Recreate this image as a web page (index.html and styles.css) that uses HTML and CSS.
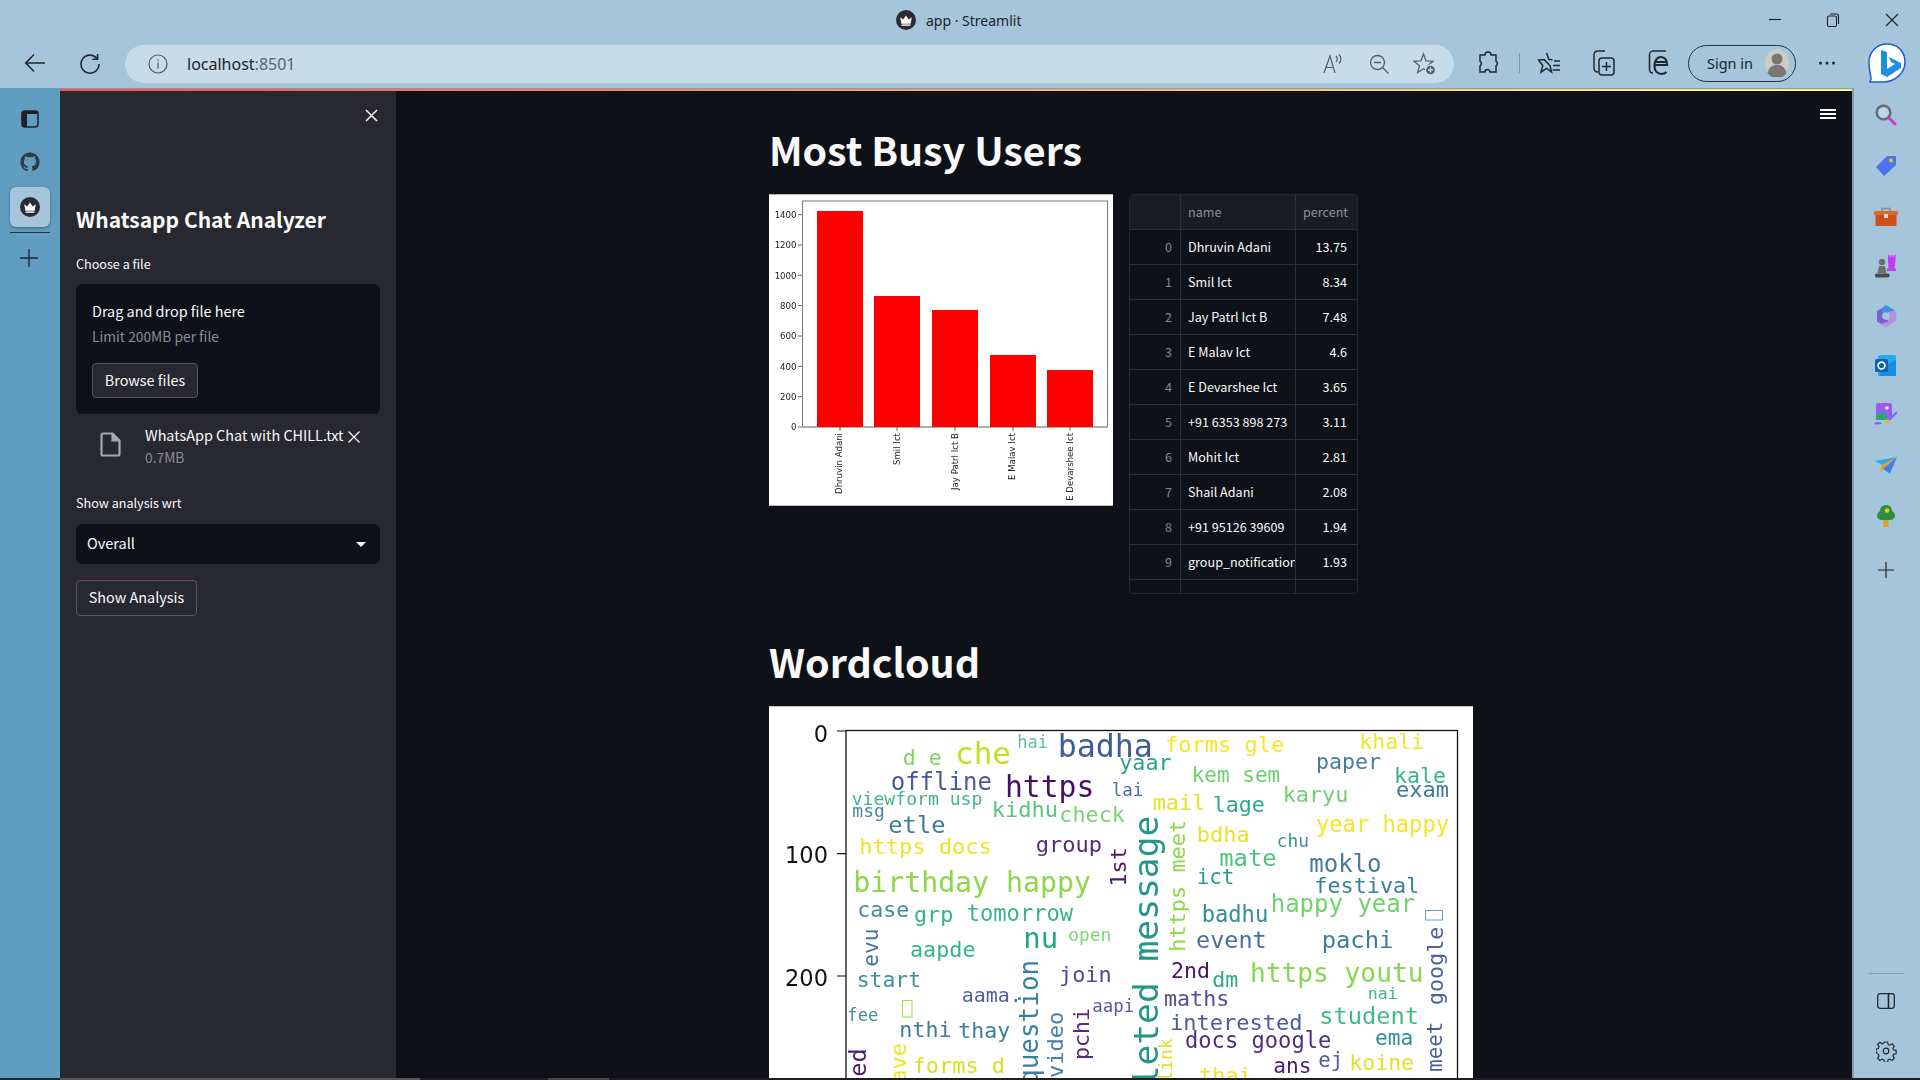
FILE: index.html
```html
<!DOCTYPE html>
<html lang="en">
<head>
<meta charset="utf-8">
<title>app · Streamlit</title>
<link rel="stylesheet" href="styles.css">
</head>
<body>
<svg class="defs" width="0" height="0" aria-hidden="true">
  <symbol id="crown" viewBox="0 0 20 20">
    <circle cx="10" cy="10" r="10" fill="#2b2b36"/>
    <path d="M4.2 7.2 7.2 9.6 10 5.6l2.8 4 3-2.4-1.2 6.6H5.4z" fill="#fff"/>
    <rect x="5.6" y="14.4" width="8.8" height="1.4" fill="#fff"/>
  </symbol>
</svg>

<header class="titlebar">
  <svg class="tab-icon" width="20" height="20"><use href="#crown"/></svg>
  <span class="tab-title">app · Streamlit</span>
  <div class="window-buttons">
    <svg class="wb-min" width="14" height="14" viewBox="0 0 14 14"><path d="M1 7.5h12" stroke="#222" stroke-width="1.2"/></svg>
    <svg class="wb-max" width="14" height="14" viewBox="0 0 14 14" fill="none" stroke="#222" stroke-width="1.1"><rect x="1.5" y="3" width="9" height="10.5" rx="1.5"/><path d="M4 1h6.5A2 2 0 0 1 12.5 3v8"/></svg>
    <svg class="wb-close" width="14" height="14" viewBox="0 0 14 14"><path d="M1 1l12 12M13 1 1 13" stroke="#222" stroke-width="1.1"/></svg>
  </div>
</header>

<nav class="toolbar">
  <svg class="tb-back" width="22" height="20" viewBox="0 0 22 20" fill="none" stroke="#1f2a30" stroke-width="1.6"><path d="M21 10H2M10 1.5 1.7 10l8.3 8.5"/></svg>
  <svg class="tb-reload" width="22" height="22" viewBox="0 0 22 22" fill="none" stroke="#1f2a30" stroke-width="1.6"><path d="M18 5.5A9 9 0 1 0 20 11"/><path d="M18.6 1v5.2h-5.2"/></svg>
  <div class="address">
    <svg width="20" height="20" viewBox="0 0 20 20" fill="none" stroke="#4a5a64" stroke-width="1.2"><circle cx="10" cy="10" r="9"/><path d="M10 8.6v6M10 5.2v1.6"/></svg>
    <span class="url"><b>localhost</b>:8501</span>
    <div class="address-icons">
      <svg class="ai-read" width="22" height="22" viewBox="0 0 22 22" fill="none" stroke="#4f5f69" stroke-width="1.2"><path d="M2 20 8 3l5 17M4 14.5h7.5"/><path d="M14 3c1.6 1.5 1.6 4 0 6M17 1.5c2.6 2.6 2.6 6.4 0 9"/></svg>
      <svg width="22" height="22" viewBox="0 0 22 22" fill="none" stroke="#4f5f69" stroke-width="1.3"><circle cx="9.5" cy="9.5" r="7"/><path d="M6 9.5h7M14.5 14.5l6 6"/></svg>
      <svg width="24" height="24" viewBox="0 0 24 24" fill="none" stroke="#4f5f69" stroke-width="1.3"><path d="M10.500 2 13 8.800l7 .4-5.400 4.500 1.800 6.800-5.900-3.800-5.900 3.800 1.800-6.800L1 9.200l7-.4z"/><circle cx="17.500" cy="18" r="5" fill="#4f5f69" stroke="#c7dce8"/><path d="M17.500 15.500v5M15 18h5" stroke="#c7dce8"/></svg>
    </div>
  </div>
  <div class="tools">
    <svg class="t-ext" width="22" height="24" viewBox="0 0 22 24" fill="none" stroke="#1f2a30" stroke-width="1.5"><path d="M8 4a3 3 0 0 1 6 0h5v6a3 3 0 0 1 0 5v6h-6a2.5 2.5 0 0 0-5 0H3v-6a3 3 0 0 0 0-5V4z"/></svg>
    <i class="t-sep"></i>
    <svg class="t-fav" width="24" height="24" viewBox="0 0 24 24" fill="none" stroke="#1f2a30" stroke-width="1.5"><path d="M9.500 2 12 8.500l3.500.2M13 14.500l1.500 6.500-5-3.500-5.500 3.700 1.800-6.700L1.500 9.200 7.200 8.600z"/><path d="M17 10h6M16 14.500h7M15.500 19h7.500"/></svg>
    <svg class="t-col" width="24" height="26" viewBox="0 0 24 26" fill="none" stroke="#1f2a30" stroke-width="1.5"><path d="M7 22c-2 0-4-1-4-4V5c0-2 1-4 4-4h7"/><rect x="8" y="8" width="15" height="17" rx="3"/><path d="M15.500 12v9M11 16.500h9"/></svg>
    <svg class="t-ie" width="22" height="26" viewBox="0 0 22 26" fill="none" stroke="#1f2a30" stroke-width="1.6"><path d="M5 23c-2 0-3.500-1-3.500-4V5C1.500 3 3 1 5 1h13"/><path d="M7 15h12c0-5-2-8-6-8s-6.500 4-6.500 9 3 8 7 8c2.500 0 4-1 5-2M7 12h11" stroke-width="2.200"/></svg>
    <div class="signin">
      <span>Sign in</span>
      <svg width="26" height="28" viewBox="0 0 26 28"><ellipse cx="13" cy="14" rx="12" ry="14" fill="#cfccc8"/><circle cx="13" cy="10" r="5.500" fill="#7b7772"/><path d="M3.500 24c1.500-6 5-8 9.500-8s8 2 9.500 8a12 14 0 0 1-19 0z" fill="#7b7772"/></svg>
    </div>
    <svg class="t-more" width="18" height="6" viewBox="0 0 18 6" fill="#1f2a30"><circle cx="2.500" cy="3" r="1.500"/><circle cx="9" cy="3" r="1.500"/><circle cx="15.500" cy="3" r="1.500"/></svg>
    <svg class="t-bing" width="38" height="40" viewBox="0 0 38 40"><path d="M19 1C9 1 1 9 1 19c0 5 1 11 2 16 .4 2-1 4-2 4h14c12 0 22-9 22-20S29 1 19 1z" fill="#fff" stroke="#1d5fd6" stroke-width="1.500"/><path d="M13 7l6 2v17l8-5-4-2-2-5 12 6v5l-14 9-6-3z" fill="#1b8fe0"/></svg>
  </div>
</nav>

<div class="middle">
  <aside class="left-rail">
    <svg class="lr-tabs" width="18" height="18" viewBox="0 0 18 18"><rect x="1" y="1" width="16" height="16" rx="3" fill="none" stroke="#1d2328" stroke-width="1.600"/><rect x="1" y="1" width="5" height="16" rx="1.500" fill="#1d2328"/><rect x="1" y="1" width="16" height="3" fill="#1d2328"/></svg>
    <svg class="lr-git" width="20" height="20" viewBox="0 0 24 24"><path fill="#2f3a42" d="M12 .5C5.650.5.500 5.650.500 12c0 5.080 3.290 9.390 7.860 10.910.570.100.780-.250.780-.550v-2.150c-3.200.700-3.870-1.360-3.870-1.360-.520-1.330-1.280-1.690-1.280-1.690-1.040-.710.080-.700.080-.700 1.150.080 1.760 1.180 1.760 1.180 1.030 1.760 2.690 1.250 3.350.960.100-.740.400-1.250.730-1.540-2.550-.290-5.240-1.280-5.240-5.680 0-1.250.450-2.280 1.180-3.080-.120-.290-.510-1.460.110-3.040 0 0 .960-.310 3.150 1.180a10.900 10.900 0 0 1 5.740 0c2.190-1.490 3.150-1.180 3.150-1.180.620 1.580.230 2.750.110 3.040.740.800 1.180 1.830 1.180 3.080 0 4.410-2.690 5.380-5.250 5.670.410.360.780 1.050.780 2.120v3.140c0 .300.210.660.790.550A11.500 11.500 0 0 0 23.500 12C23.500 5.650 18.350.500 12 .500z"/></svg>
    <div class="lr-active"><svg width="20" height="20"><use href="#crown"/></svg></div>
    <i class="lr-line"></i>
    <svg class="lr-plus" width="18" height="18" viewBox="0 0 18 18"><path d="M9 0v18M0 9h18" stroke="#1d2328" stroke-width="1.300"/></svg>
  </aside>

  <div class="workspace">
    <div class="decoration"></div>
    <div class="panes">
      <section class="sidebar">
        <div class="close-row"><svg width="13" height="13" viewBox="0 0 13 13"><path d="M1 1l11 11M12 1 1 12" stroke="#fafafa" stroke-width="1.500"/></svg></div>
        <h2 class="side-title">Whatsapp Chat Analyzer</h2>
        <div class="label first">Choose a file</div>
        <div class="uploader">
          <div class="drop-title">Drag and drop file here</div>
          <div class="drop-limit">Limit 200MB per file</div>
          <div class="btn browse">Browse files</div>
        </div>
        <div class="file-row">
          <svg class="file-icon" width="21" height="25" viewBox="0 0 21 25" fill="none" stroke="#a3a8b8" stroke-width="2.200"><path d="M3 1.500h9.500L19.500 8.500V22a1.500 1.500 0 0 1-1.500 1.500H3A1.500 1.500 0 0 1 1.500 22V3A1.500 1.500 0 0 1 3 1.500z"/><path d="M12.500 1.500v7h7" fill="#a3a8b8"/></svg>
          <div class="file-text">
            <div class="file-name">WhatsApp Chat with CHILL.txt</div>
            <div class="file-size">0.7MB</div>
          </div>
          <svg class="file-x" width="12" height="12" viewBox="0 0 12 12"><path d="M.5.500l11 11M11.500.500l-11 11" stroke="#fafafa" stroke-width="1.300"/></svg>
        </div>
        <div class="label second">Show analysis wrt</div>
        <div class="select"><span>Overall</span><i class="caret"></i></div>
        <i class="focus-line"></i>
        <div class="btn show">Show Analysis</div>
      </section>

      <main class="main">
        <svg class="menu" width="16" height="10" viewBox="0 0 16 10" fill="#fafafa"><rect width="16" height="2"/><rect y="4" width="16" height="2"/><rect y="8" width="16" height="2"/></svg>
        <h1 class="heading h-busy">Most Busy Users</h1>
        <div class="columns">
          <svg class="chart" width="344" height="312" viewBox="769 194 344 312">
            <rect x="769" y="194" width="344" height="312" fill="#fff"/>
            <path d="M769 194.500h344M769 505.500h344" stroke="#b5b5b5"/>
            <rect x="802.500" y="201" width="305" height="226" fill="none" stroke="#777"/>
            <path d="M802 427h306" stroke="#aaa" stroke-width="1.500"/>
            <g fill="#f00">
              <rect x="817" y="211" width="46" height="216"/>
              <rect x="874" y="296" width="46" height="131"/>
              <rect x="932" y="310" width="46" height="117"/>
              <rect x="990" y="355" width="46" height="72"/>
              <rect x="1047" y="370" width="46" height="57"/>
            </g>
            <g stroke="#444" stroke-width=".8">
              <path d="M798 214.700h4M798 245h4M798 275.300h4M798 305.600h4M798 336h4M798 366.300h4M798 396.700h4M798 427h4"/>
              <path d="M840 427v4M897 427v4M955 427v4M1013 427v4M1070 427v4"/>
            </g>
            <g class="ticks" text-anchor="end">
              <text x="796.500" y="218">1400</text><text x="796.500" y="248">1200</text><text x="796.500" y="278.500">1000</text><text x="796.500" y="309">800</text><text x="796.500" y="339">600</text><text x="796.500" y="369.500">400</text><text x="796.500" y="400">200</text><text x="796.500" y="430">0</text>
              <text transform="translate(842 433) rotate(-90)">Dhruvin Adani</text>
              <text transform="translate(899.500 433) rotate(-90)">Smil Ict</text>
              <text transform="translate(957.500 433) rotate(-90)">Jay Patrl Ict B</text>
              <text transform="translate(1015 433) rotate(-90)">E Malav Ict</text>
              <text transform="translate(1073 433) rotate(-90)">E Devarshee Ict</text>
            </g>
          </svg>

          <div class="frame">
            <div class="cell head"></div><div class="cell head">name</div><div class="cell head">percent</div>
            <div class="cell idx">0</div><div class="cell">Dhruvin Adani</div><div class="cell num">13.75</div>
            <div class="cell idx">1</div><div class="cell">Smil Ict</div><div class="cell num">8.34</div>
            <div class="cell idx">2</div><div class="cell">Jay Patrl Ict B</div><div class="cell num">7.48</div>
            <div class="cell idx">3</div><div class="cell">E Malav Ict</div><div class="cell num">4.6</div>
            <div class="cell idx">4</div><div class="cell">E Devarshee Ict</div><div class="cell num">3.65</div>
            <div class="cell idx">5</div><div class="cell">+91 6353 898 273</div><div class="cell num">3.11</div>
            <div class="cell idx">6</div><div class="cell">Mohit Ict</div><div class="cell num">2.81</div>
            <div class="cell idx">7</div><div class="cell">Shail Adani</div><div class="cell num">2.08</div>
            <div class="cell idx">8</div><div class="cell">+91 95126 39609</div><div class="cell num">1.94</div>
            <div class="cell idx">9</div><div class="cell">group_notification</div><div class="cell num">1.93</div>
            <div class="cell tail"></div><div class="cell tail"></div><div class="cell tail"></div>
          </div>
        </div>

        <h1 class="heading h-cloud">Wordcloud</h1>
        <svg class="cloud" width="704" height="372" viewBox="769 706 704 372">
          <rect x="769" y="706" width="704" height="372" fill="#fff"/>
          <path d="M769 706.500h704" stroke="#c5c5c5"/>
          <g class="words">
            <text x="1017.300" y="747.700" font-size="17" fill="#5cc490">hai</text>
            <text x="902.700" y="765" font-size="21.600" fill="#7dd560">d e</text>
            <text x="955" y="764" font-size="31" fill="#c2df23">che</text>
            <text x="1057.700" y="756.700" font-size="31.600" fill="#3e5d94">badha</text>
            <text x="890.700" y="790" font-size="24" fill="#46599a">offline</text>
            <text x="1005" y="796.700" font-size="29.700" fill="#440f68">https</text>
            <text x="1111.700" y="796" font-size="17.500" fill="#4a6fa5">lai</text>
            <text x="851.700" y="805" font-size="18.100" fill="#3fb58f">viewform usp</text>
            <text x="852.300" y="816.700" font-size="18" fill="#4a86a5">msg</text>
            <text x="991.700" y="816.700" font-size="22" fill="#5ec27f">kidhu</text>
            <text x="1059.300" y="821.700" font-size="21.800" fill="#7ad475">check</text>
            <text x="888.300" y="832.700" font-size="23.800" fill="#3c7d9a">etle</text>
            <text x="859.300" y="854" font-size="22" fill="#f5e12a">https docs</text>
            <text x="1035.700" y="851.700" font-size="22" fill="#5a2a75">group</text>
            <text x="853.300" y="892.300" font-size="28.200" fill="#8bd84a">birthday happy</text>
            <text x="857.300" y="916.700" font-size="21.600" fill="#3f8f9c">case</text>
            <text x="914" y="921.700" font-size="21.800" fill="#33b28c">grp</text>
            <text x="966.700" y="920.700" font-size="22.100" fill="#38b48a">tomorrow</text>
            <text x="1023.300" y="948.300" font-size="29" fill="#23a583">nu</text>
            <text x="1068.300" y="941" font-size="17.900" fill="#7ad67a">open</text>
            <text transform="translate(878.300 966.700) rotate(-90)" font-size="21.200" fill="#4a6fa5">evu</text>
            <text x="910" y="956.700" font-size="21.800" fill="#37b48a">aapde</text>
            <text transform="translate(1038.300 1085) rotate(-90)" font-size="26" fill="#3a7fa0">question</text>
            <text x="1059" y="981.700" font-size="21.900" fill="#4a4a96">join</text>
            <text x="856.700" y="987.300" font-size="21.400" fill="#3f8f9c">start</text>
            <text x="961.700" y="1001.700" font-size="20" fill="#4f5f9f">aama.</text>
            <text x="847.300" y="1020.700" font-size="17.200" fill="#3f8f9c">fee</text>
            <text x="1092.300" y="1011.700" font-size="17.400" fill="#5a5aa0">aapi</text>
            <text x="899.300" y="1036.700" font-size="21.700" fill="#3c7d9a">nthi</text>
            <text x="958.300" y="1038.300" font-size="21.500" fill="#3c7d9a">thay</text>
            <text transform="translate(1063.300 1078) rotate(-90)" font-size="22" fill="#4a7fa8">video</text>
            <text transform="translate(1089.300 1060) rotate(-90)" font-size="21.600" fill="#5a2a7a">pchi</text>
            <text transform="translate(866 1105) rotate(-90)" font-size="23.500" fill="#4a1a6e">need</text>
            <text transform="translate(905.700 1096) rotate(-90)" font-size="22" fill="#f1e22c">have</text>
            <text x="912.700" y="1072.700" font-size="21.900" fill="#d7e21f">forms d</text>
            <text transform="translate(1158.300 1128) rotate(-90)" font-size="34.600" fill="#24958a">deleted message</text>
            <text transform="translate(1126 886.700) rotate(-90)" font-size="22" fill="#481b6d">1st</text>
            <text transform="translate(1171.700 1081.600) rotate(-90)" font-size="18" fill="#d9e12b">link</text>
            <text x="1199.300" y="1083" font-size="21.700" fill="#f5e12a">thai</text>
            <text x="1165" y="751.700" font-size="22" fill="#f8e621">forms gle</text>
            <text x="1359.300" y="749.300" font-size="21.500" fill="#f1e531">khali</text>
            <text x="1119.300" y="770" font-size="21.700" fill="#2d9e8a">yaar</text>
            <text x="1191.700" y="781.700" font-size="21" fill="#6dcf6c">kem sem</text>
            <text x="1316" y="769.300" font-size="21.600" fill="#447da0">paper</text>
            <text x="1394" y="782.700" font-size="21.600" fill="#35b48a">kale</text>
            <text x="1396" y="796.700" font-size="22" fill="#3f7a9b">exam</text>
            <text x="1282.700" y="801.700" font-size="21.800" fill="#6ed06b">karyu</text>
            <text x="1152.700" y="810" font-size="21.900" fill="#e3e42a">mail</text>
            <text x="1212.700" y="811.700" font-size="21.700" fill="#2fa88a">lage</text>
            <text x="1316" y="831.700" font-size="22.100" fill="#f4e62b">year happy</text>
            <text x="1196.700" y="842.300" font-size="22" fill="#ece12a">bdha</text>
            <text x="1276.700" y="846.700" font-size="17.900" fill="#3f8f9c">chu</text>
            <text x="1219.300" y="865.700" font-size="23.800" fill="#4fc27c">mate</text>
            <text x="1309.300" y="871.700" font-size="24" fill="#467a9d">moklo</text>
            <text x="1196.700" y="884.300" font-size="20.900" fill="#2c9c8d">ict</text>
            <text x="1314.300" y="892.700" font-size="21.800" fill="#3a7f9c">festival</text>
            <text x="1270.700" y="912.300" font-size="24" fill="#6fd36d">happy year</text>
            <text x="1201.700" y="922.300" font-size="22.100" fill="#2f8f96">badhu</text>
            <text transform="translate(1185 951.700) rotate(-90)" font-size="21.900" fill="#8fd948">https meet</text>
            <text x="1196" y="947.700" font-size="23.500" fill="#4a6ea0">event</text>
            <text x="1321.700" y="947.700" font-size="23.800" fill="#3a7f9c">pachi</text>
            <text transform="translate(1442.700 1005) rotate(-90)" font-size="21.700" fill="#4f5e9e">google</text>
            <rect x="1425.500" y="910.500" width="17" height="9.500" fill="none" stroke="#6a9fc0" stroke-width="1"/>
            <text x="1171" y="977.700" font-size="21.600" fill="#4b1268">2nd</text>
            <text x="1212.300" y="986.700" font-size="21.600" fill="#2ea88a">dm</text>
            <text x="1250" y="981.700" font-size="26.200" fill="#83d94f">https youtu</text>
            <text x="1164" y="1005.700" font-size="21.700" fill="#5a4a96">maths</text>
            <text x="1367.700" y="999.300" font-size="16.600" fill="#3fb58f">nai</text>
            <text x="1319.300" y="1024" font-size="23.700" fill="#3ebc84">student</text>
            <text x="1170" y="1030" font-size="22" fill="#4b5b9e">interested</text>
            <text x="1185" y="1048.300" font-size="22.100" fill="#4f2d7f">docs google</text>
            <text x="1375" y="1045" font-size="21.200" fill="#2f8f96">ema</text>
            <text x="1318.300" y="1066.700" font-size="20.800" fill="#4f5e9e">ej</text>
            <text x="1273.300" y="1072.700" font-size="21.200" fill="#451f6f">ans</text>
            <text x="1349.300" y="1070" font-size="21.500" fill="#dfe32a">koine</text>
            <text transform="translate(1442.300 1071.700) rotate(-90)" font-size="20.800" fill="#4a5e9e">meet</text>
            <rect x="902.500" y="1000.500" width="9.500" height="16.500" fill="none" stroke="#9be54a" stroke-width="1.100"/>
          </g>
          <rect x="846" y="730.500" width="611.500" height="360" fill="none" stroke="#111" stroke-width="1.300"/>
          <path d="M837 731h9M837 853.700h9M837 976h9" stroke="#111" stroke-width="1.200"/>
          <g class="axis-labels" text-anchor="end">
            <text x="828" y="741.500">0</text><text x="828" y="863">100</text><text x="828" y="986">200</text>
          </g>
        </svg>
      </main>
    </div>
  </div>

  <aside class="right-rail">
    <svg class="rr-i search" width="22" height="22" viewBox="0 0 22 22" fill="none"><circle cx="8.500" cy="8.500" r="6.800" stroke="#6b6b70" stroke-width="2.600" fill="#bcd6e6"/><path d="M14 14l6 6" stroke="#c83fd6" stroke-width="3" stroke-linecap="round"/></svg>
    <svg class="rr-i tag" width="22" height="22" viewBox="0 0 22 22"><path d="M12 1h9v9L9 21 1 12z" fill="#4a74ee"/><circle cx="16" cy="5.500" r="2" fill="#f5c21c"/></svg>
    <svg class="rr-i box" width="24" height="20" viewBox="0 0 24 20"><path d="M8 4V1.500h8V4" fill="none" stroke="#8c8c8c" stroke-width="1.600"/><rect y="4" width="24" height="4.500" rx="1" fill="#e06a2a"/><rect x="1.500" y="8" width="21" height="11" rx="1" fill="#cf4f1c"/><rect x="10" y="7" width="4" height="4" fill="#d8d8d8"/></svg>
    <svg class="rr-i chess" width="24" height="24" viewBox="0 0 24 24"><path d="M14 1h1.500v1.500H17V1h1.500v1.500H20V1h1.500v6l-1 7.500h1.500v2.500h-9v-2.500h1.500L14 7z" fill="#c03df0"/><circle cx="8" cy="8" r="3.200" fill="#6e6e70"/><path d="M5 12h6l1.500 7H3.500z" fill="#6e6e70"/><rect x="1" y="19.500" width="14.500" height="4" rx="1.500" fill="#4b4b4d"/></svg>
    <svg class="rr-i m365" width="22" height="24" viewBox="0 0 22 24"><path d="M11 1 20 6.500v5L14 8l-7 4V4z" fill="#3e8fd6"/><path d="M2 7l5-3v9l7 4 0 0-3 6-9-5.500z" fill="#7a5fd0"/><path d="M20 6.500c2 3 2 8 0 11L11 23l-5-3 8-3V8z" fill="#b68fe0"/><circle cx="11" cy="12" r="3.800" fill="#a5c5da"/></svg>
    <svg class="rr-i outlook" width="22" height="22" viewBox="0 0 22 22"><rect x="3" y="0" width="18" height="21" rx="1.500" fill="#28a8ea"/><path d="M9 11l12-6v16H4z" fill="#1490df"/><rect y="4" width="13" height="13" rx="1.500" fill="#0a63b8"/><circle cx="6.500" cy="10.500" r="3.400" fill="none" stroke="#fff" stroke-width="1.600"/></svg>
    <svg class="rr-i image" width="24" height="24" viewBox="0 0 24 24"><rect x="2" y="0" width="16" height="17" rx="2" fill="#9a5cf0"/><circle cx="13" cy="5" r="1.800" fill="#eee"/><path d="M2 13l6-5 6 6-3 3H2z" fill="#2fa56f"/><path d="M1 21c2-2 4 0 6-1M23 9l-9 9" stroke="#7a6cf0" stroke-width="2.200" fill="none"/><path d="M11 19l3-3 2 2-3 3z" fill="#f0b41c"/></svg>
    <svg class="rr-i plane" width="22" height="17" viewBox="0 0 22 17"><path d="M0 4 22 0 7 8z" fill="#29a9ee"/><path d="M22 0 7 8l-2 8 3-4z" fill="#f09a1c"/><path d="M22 0 8 12l7 4.500z" fill="#3f7fee"/></svg>
    <svg class="rr-i tree" width="18" height="22" viewBox="0 0 18 22"><path d="M9 0c4 0 6 3 6 6 2 1 3 3 3 5 0 2-2 4-5 4H5c-3 0-5-2-5-4 0-2 1-4 3-5 0-3 2-6 6-6z" fill="#2f8f3f"/><rect x="6.500" y="15" width="5" height="7" fill="#e0a020"/><circle cx="10" cy="5.500" r="2.300" fill="#f2c51c"/></svg>
    <svg class="rr-i plus" width="16" height="16" viewBox="0 0 16 16"><path d="M8 0v16M0 8h16" stroke="#1d2328" stroke-width="1.200"/></svg>
    <div class="rr-bottom">
      <i class="rr-sep"></i>
      <svg width="18" height="16" viewBox="0 0 18 16" fill="none" stroke="#1f2a30" stroke-width="1.300"><rect x=".7" y=".7" width="16.600" height="14.600" rx="2.500"/><path d="M11.500.7v14.600" stroke-width="1.600"/></svg>
      <svg width="21" height="21" viewBox="0 0 21 21" fill="none" stroke="#1f2a30" stroke-width="1.200"><path d="M8.800 1h3.400l.6 2.700 1.700.7 2.400-1.500 2.400 2.400-1.500 2.400.7 1.700 2.700.6v3.400l-2.700.6-.7 1.700 1.500 2.400-2.400 2.400-2.400-1.500-1.700.7-.6 2.700H8.800l-.6-2.700-1.700-.7-2.400 1.500-2.400-2.400 1.500-2.400-.7-1.700L0 11.900V8.500l2.500-.6.700-1.700-1.500-2.400 2.400-2.400 2.400 1.500 1.700-.7z" transform="scale(.95)"/><circle cx="10" cy="10" r="2.800"/></svg>
    </div>
  </aside>
</div>

<footer class="scrollbar-strip">
  <i class="sb-a"></i><i class="sb-b"></i><i class="sb-c"></i>
</footer>
</body>
</html>
```

FILE: styles.css
```css
* { box-sizing: border-box; }
html, body { margin: 0; height: 100%; }
body {
  display: flex;
  flex-direction: column;
  width: 1920px;
  height: 1080px;
  overflow: hidden;
  background: #a5c5da;
  font-family: "Noto Sans CJK JP", "Liberation Sans", sans-serif;
  color: #fafafa;
}
.defs { position: absolute; }
svg { display: block; flex: none; }
i { display: block; }

/* browser chrome */
.titlebar {
  height: 40px;
  flex: none;
  display: flex;
  align-items: center;
  padding-left: 896px;
  background: #a4c5da;
  color: #1c2329;
  font-family: "Noto Sans", sans-serif;
  font-size: 14px;
}
.tab-title { margin-left: 10px; }
.window-buttons { margin-left: auto; display: flex; padding-right: 21px; }
.wb-min { margin-top: -1px; }
.wb-max { margin-left: 44px; }
.wb-close { margin-left: 45px; }

.toolbar {
  height: 48px;
  flex: none;
  display: flex;
  align-items: flex-start;
  background: #a4c5da;
  color: #1c2329;
  font-family: "Noto Sans", sans-serif;
}
.tb-back { margin: 13px 0 0 24px; }
.tb-reload { margin: 13px 0 0 33px; }
.address {
  width: 1329px;
  height: 38px;
  margin: 5px 0 0 24px;
  padding-left: 23px;
  border-radius: 19px;
  background: #c7dce8;
  display: flex;
  align-items: center;
}
.url { margin-left: 19px; font-size: 16px; color: #55656f; }
.url b { font-weight: 400; color: #1c2329; }
.address-icons { margin-left: auto; display: flex; align-items: center; gap: 23px; padding-right: 17px; }
.ai-read { margin-right: 1px; }
.tools { display: flex; align-items: center; height: 48px; margin-top: -1px; }
.t-ext { margin-left: 23px; }
.t-sep { width: 1px; height: 20px; margin-left: 20px; background: #7c98aa; }
.t-fav { margin-left: 17px; }
.t-col { margin-left: 30px; }
.t-ie { margin-left: 33px; }
.signin {
  width: 108px;
  height: 37px;
  margin-left: 18px;
  padding-left: 18px;
  padding-right: 5px;
  border: 1.500px solid #27323a;
  border-radius: 19px;
  display: flex;
  align-items: center;
  justify-content: space-between;
  font-size: 14.500px;
}
.t-more { margin-left: 22px; }
.t-bing { margin-left: 32px; }

/* middle band */
.middle { flex: 1; display: flex; min-height: 0; }
.left-rail {
  width: 60px;
  flex: none;
  position: relative;
  background: #619dc0;
  display: flex;
  flex-direction: column;
  align-items: center;
}
.lr-tabs { margin: 22px 0 0 -1px; }
.lr-git { margin-top: 24px; }
.lr-active {
  width: 40px;
  height: 40px;
  margin-top: 15px;
  border-radius: 6px;
  background: #a4c5da;
  box-shadow: 0 1px 3px rgba(0, 0, 0, .35);
  display: flex;
  align-items: center;
  justify-content: center;
}
.lr-line { width: 40px; height: 1px; margin-top: 5px; background: #27323a; }
.lr-plus { margin: 16px 0 0 -2px; }

.workspace { width: 1792px; flex: none; display: flex; flex-direction: column; }
.decoration {
  height: 3px;
  flex: none;
  background: linear-gradient(90deg, #ff4b4b, #fffd80);
  border-top: 1px solid #7f9bad;
}
.panes { flex: 1; display: flex; min-height: 0; }

/* sidebar */
.sidebar { width: 336px; flex: none; padding: 0 16px; background: #282830; }
.close-row { display: flex; justify-content: flex-end; padding: 18px 2px 0 0; }
.side-title { margin: 81px 0 0; font-size: 21px; font-weight: 600; line-height: 32px; color: #fafafa; }
.label { font-size: 12.600px; line-height: 20px; }
.label.first { margin-top: 19px; }
.uploader { height: 130px; margin-top: 10px; padding: 15px 16px 0; border-radius: 6px; background: #0e1117; }
.drop-title { font-size: 14.400px; line-height: 24px; }
.drop-limit { margin-top: 3px; font-size: 13.800px; line-height: 20px; color: #8b8d92; }
.btn {
  border: 1px solid #55565e;
  border-radius: 4px;
  background: #282830;
  font-size: 14.400px;
  padding-bottom: 3px;
  display: flex;
  align-items: center;
  justify-content: center;
}
.browse { width: 106px; height: 35px; margin-top: 17px; }
.file-row { display: flex; height: 79px; padding-left: 24px; }
.file-icon { margin-top: 18px; }
.file-text { margin-left: 24px; width: 203px; }
.file-name { margin-top: 9px; font-size: 14.400px; line-height: 24px; white-space: nowrap; }
.file-size { margin-top: 0; font-size: 13.800px; line-height: 20px; color: #8b8d92; }
.file-x { margin: 17px 0 0 0; }
.select {
  height: 40px;
  margin-top: 11px;
  padding: 0 14px 3px 11px;
  border-radius: 6px;
  background: #0e1117;
  display: flex;
  align-items: center;
  justify-content: space-between;
  font-size: 14.500px;
}
.caret { width: 0; height: 0; margin-top: 3px; border-left: 5px solid transparent; border-right: 5px solid transparent; border-top: 5px solid #fafafa; }
.focus-line { width: 115px; height: 1px; margin: 12px 0 0 3px; background: #47262e; }
.show { width: 121px; height: 36px; margin-top: 3px; }

/* main */
.main { flex: 1; position: relative; overflow: hidden; padding-left: 373px; background: #0e1117; }
.menu { position: absolute; top: 18px; right: 16px; }
.heading { margin: 0; font-size: 39.400px; font-weight: 700; line-height: 50px; color: #fafafa; }
.h-busy { padding-top: 33px; height: 86px; margin-bottom: 17px; }
.h-cloud { margin-top: 42px; margin-bottom: 20px; }
.columns { display: flex; gap: 16px; align-items: flex-start; }
.chart { filter: blur(.35px); }
.ticks text { font-family: "DejaVu Sans", sans-serif; font-size: 8.600px; fill: #222; }
.frame {
  width: 229px;
  display: grid;
  grid-template-columns: 51px 115px 1fr;
  grid-template-rows: 35px repeat(10, 35px) 13px;
  border: 1px solid #23262e;
  border-radius: 4px;
  overflow: hidden;
  font-size: 12.600px;
}
.cell {
  padding: 0 7px 1px;
  overflow: hidden;
  white-space: nowrap;
  display: flex;
  align-items: center;
  border-right: 1px solid #2b2e36;
  border-bottom: 1px solid #2b2e36;
}
.cell:nth-child(3n) { border-right: 0; }
.head { background: #1a1c24; color: #8d9096; }
.idx { justify-content: flex-end; padding-right: 8px; color: #85878c; }
.num { justify-content: flex-end; padding-right: 10px; }
.tail { border-bottom: 0; }
.cloud { filter: blur(.3px); }
.words text { font-family: "DejaVu Sans Mono", monospace; }
.axis-labels text { font-family: "DejaVu Sans", sans-serif; font-size: 22.500px; fill: #111; }

/* right rail */
.right-rail {
  width: 68px;
  flex: none;
  display: flex;
  flex-direction: column;
  align-items: center;
  background: #a5c5da;
  border-left: 2px solid #7f9fb5;
}
.rr-i { margin-left: -2px; }
.search { margin-top: 16px; }
.tag { margin-top: 29px; }
.box { margin-top: 30px; }
.chess { margin-top: 27px; }
.m365 { margin-top: 26px; }
.outlook { margin-top: 27px; }
.image { margin-top: 26px; }
.plane { margin-top: 30px; }
.tree { margin-top: 31px; }
.plus { margin-top: 35px; }
.rr-bottom { margin-top: auto; margin-left: -2px; padding-bottom: 16px; display: flex; flex-direction: column; align-items: center; }
.rr-sep { width: 35px; height: 1px; background: #7f9fb5; margin-bottom: 19px; }
.rr-bottom svg + svg { margin-top: 32px; }

/* bottom strip */
.scrollbar-strip { height: 2px; flex: none; display: flex; background: #1e1e1e; }
.sb-a { width: 60px; background: #1d2b33; }
.sb-b { width: 360px; background: #56565a; }
.sb-c { width: 61px; margin-left: 128px; background: #48484c; }
```
